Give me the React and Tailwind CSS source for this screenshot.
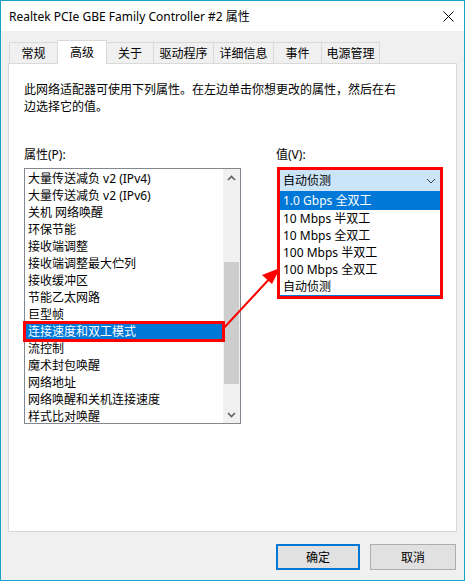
import { useState } from 'react';

const props = [
  '大量传送减负 v2 (IPv4)',
  '大量传送减负 v2 (IPv6)',
  '关机 网络唤醒',
  '环保节能',
  '接收端调整',
  '接收端调整最大伫列',
  '接收缓冲区',
  '节能乙太网路',
  '巨型帧',
  '连接速度和双工模式',
  '流控制',
  '魔术封包唤醒',
  '网络地址',
  '网络唤醒和关机连接速度',
  '样式比对唤醒',
];

const values = ['1.0 Gbps 全双工', '10 Mbps 半双工', '10 Mbps 全双工', '100 Mbps 半双工', '100 Mbps 全双工', '自动侦测'];

const tabs = [
  { label: '常规', w: 'w-[48px]' },
  { label: '高级', w: 'w-[50px]', active: true },
  { label: '关于', w: 'w-[46px]' },
  { label: '驱动程序', w: 'w-[60px]' },
  { label: '详细信息', w: 'w-[60px]' },
  { label: '事件', w: 'w-[48px]' },
  { label: '电源管理', w: 'w-[59px]' },
];

function Tabs() {
  return (
    <div className="flex items-end h-[23px] mt-[9px] pl-px">
      {tabs.map((t, i) => {
        const prevActive = i > 0 && tabs[i - 1].active;
        if (t.active) {
          return (
            <div
              key={t.label}
              className={`${t.w} h-[24px] -mb-px relative z-10 bg-white border-x border-t border-[#d9d9d9] flex justify-center pt-[3px] leading-[17px]`}
            >
              {t.label}
            </div>
          );
        }
        return (
          <div
            key={t.label}
            className={`${t.w} h-[21px] bg-[#f0f0f0] border-t border-[#d9d9d9] ${prevActive ? '' : 'border-l'} ${
              i === tabs.length - 1 ? 'border-r' : ''
            } flex justify-center pt-[2px] leading-[17px]`}
          >
            {t.label}
          </div>
        );
      })}
    </div>
  );
}

function ListBox() {
  const [sel, setSel] = useState(9);
  return (
    <div className="w-[217px] h-[256px] border border-[#828790] bg-white flex mt-[5px]">
      <div className="flex-1 flex flex-col pt-px">
        {props.map((p, i) => (
          <div
            key={p}
            onClick={() => setSel(i)}
            className={
              i === sel
                ? 'relative z-10 h-[17px] leading-[17px] pl-[3px] bg-[#0078d7] text-white outline-[3px] outline-solid outline-[#ff0000] -outline-offset-1'
                : 'h-[17px] leading-[17px] pl-[3px] whitespace-nowrap'
            }
          >
            {p}
          </div>
        ))}
      </div>
      <div className="w-[17px] bg-[#f0f0f0] flex flex-col items-center">
        <div className="h-[17px] flex items-center justify-center text-[#606060]">
          <svg width="9" height="6" viewBox="0 0 9 6">
            <path d="M1 5 L4.5 1.5 L8 5" fill="none" stroke="currentColor" strokeWidth="1.6" />
          </svg>
        </div>
        <div className="h-[76px]" />
        <div className="w-[15px] h-[122px] bg-[#cdcdcd]" />
        <div className="flex-1" />
        <div className="h-[17px] flex items-center justify-center text-[#606060]">
          <svg width="9" height="6" viewBox="0 0 9 6">
            <path d="M1 1 L4.5 4.5 L8 1" fill="none" stroke="currentColor" strokeWidth="1.6" />
          </svg>
        </div>
      </div>
    </div>
  );
}

function ComboOpen() {
  return (
    <div className="w-[166px] border-[3px] border-[#ff0000] mt-[4px] ml-px">
      <div className="h-[21px] bg-[#cce4f7] flex items-center justify-between pl-[3px] pr-[4px] leading-[17px]">
        <span>自动侦测</span>
        <svg width="10" height="6" viewBox="0 0 10 6" className="text-[#404040]">
          <path d="M1 1 L5 5 L9 1" fill="none" stroke="currentColor" strokeWidth="1" />
        </svg>
      </div>
      <div className="border-b border-[#0078d7] bg-white">
        {values.map((v, i) => (
          <div
            key={v}
            className={
              i === 0
                ? 'h-[19px] leading-[19px] pl-[3px] bg-[#0078d7] text-white'
                : 'h-[17px] leading-[17px] pl-[3px]'
            }
          >
            {v}
          </div>
        ))}
      </div>
    </div>
  );
}

export default function App() {
  return (
    <div className="relative w-[465px] h-[581px] border border-[#17a2c7] bg-[#f0f0f0] flex flex-col text-[12px] text-black font-['Noto_Sans','Noto_Sans_CJK_SC',sans-serif]">
      {/* title bar */}
      <div className="h-[30px] bg-white flex items-center justify-between pl-[8px] pr-[10px] shrink-0">
        <span className="leading-[17px] text-[#000]">Realtek PCIe GBE Family Controller #2 属性</span>
        <svg width="11" height="11" viewBox="0 0 11 11">
          <path d="M0.5 0.5 L10.5 10.5 M10.5 0.5 L0.5 10.5" stroke="#000" strokeWidth="1" />
        </svg>
      </div>

      <div className="px-[7px] flex flex-col flex-1">
        <Tabs />

        <div className="h-[469px] bg-white border border-[#d9d9d9] pl-[15px] pt-[17px]">
          <p className="leading-[17px]">
            此网络适配器可使用下列属性。在左边单击你想更改的属性，然后在右
            <br />
            边选择它的值。
          </p>

          <div className="flex mt-[31px]">
            <div className="flex flex-col">
              <div className="leading-[17px]">属性(P):</div>
              <ListBox />
            </div>
            <div className="flex flex-col ml-[35px]">
              <div className="leading-[17px]">值(V):</div>
              <ComboOpen />
            </div>
          </div>
        </div>

        <div className="flex justify-end gap-[10px] mt-[12px] pr-px">
          <button className="w-[84px] h-[26px] bg-[#e1e1e1] border-2 border-[#0078d7] leading-[17px]">确定</button>
          <button className="w-[86px] h-[26px] bg-[#e1e1e1] border border-[#adadad] leading-[17px]">取消</button>
        </div>
      </div>

      {/* annotation arrow */}
      <svg className="absolute -left-px -top-px pointer-events-none" width="465" height="581" viewBox="0 0 465 581">
        <line x1="222" y1="330" x2="272" y2="276" stroke="#ff0000" strokeWidth="2" />
        <polygon points="280,268 262,275 272,284" fill="#ff0000" />
      </svg>
    </div>
  );
}
